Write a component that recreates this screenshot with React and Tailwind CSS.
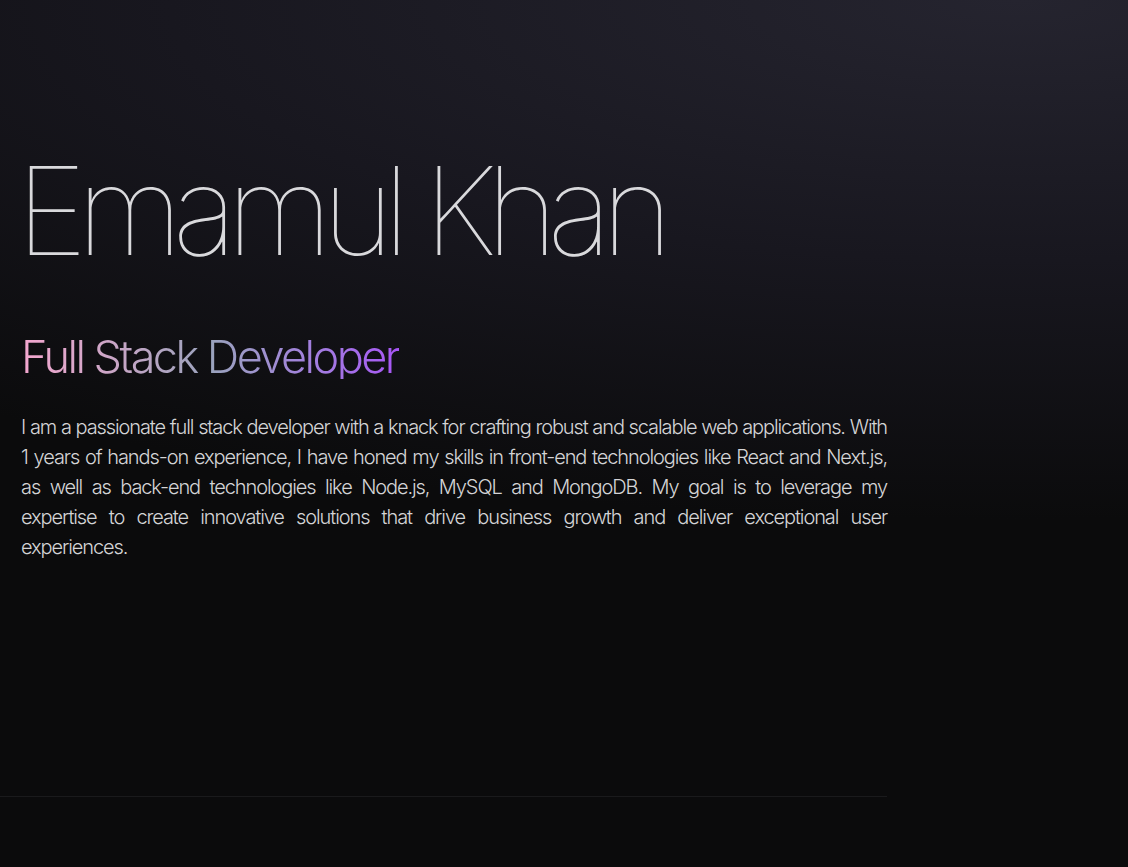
export default function App() {
  return (
    <div className="min-h-screen w-full bg-[#0b0b0c] bg-[radial-gradient(ellipse_150%_60%_at_90%_0%,#25242f_0%,#18171f_50%,#0b0b0c_100%)] font-['Inter',sans-serif] text-neutral-200">
      <section className="w-[887px] h-[797px] border-b border-[#1a1a1c] flex flex-col pl-[21px] pt-[150px]">
        <h1 className="-ml-[5px] text-[122px] font-thin leading-none tracking-[-0.083em] text-[#d9d9dc]">
          Emamul Khan
        </h1>
        <h2 className="mt-[62px] text-[45px] font-light leading-none tracking-[-0.056em] bg-gradient-to-r from-[#f4a7cf] via-[#9aa3bd] to-[#a855f7] bg-clip-text text-transparent w-fit">
          Full Stack Developer
        </h2>
        <p className="mt-[33px] text-xl leading-[30px] font-light tracking-[-0.055em] text-justify text-[#d4d4d6]">
          I am a passionate full stack developer with a knack for crafting robust and scalable web
          applications. With 1 years of hands-on experience, I have honed my skills in front-end
          technologies like React and Next.js, as well as back-end technologies like Node.js, MySQL
          and MongoDB. My goal is to leverage my expertise to create innovative solutions that drive
          business growth and deliver exceptional user experiences.
        </p>
      </section>
    </div>
  );
}
